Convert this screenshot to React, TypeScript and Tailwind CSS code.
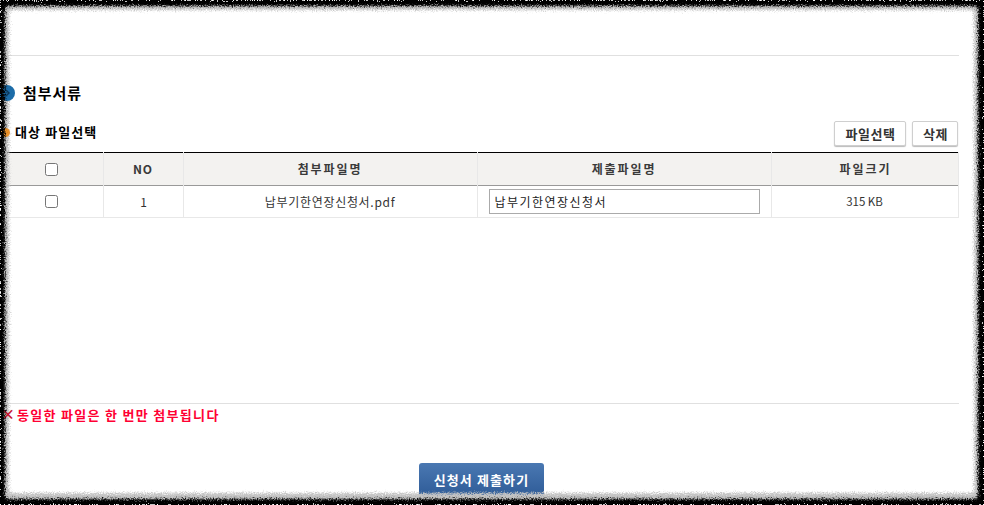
export default function App() {
  const font = { fontFamily: '"Noto Sans CJK KR", "Liberation Sans", sans-serif' };
  return (
    <div className="relative w-[984px] h-[505px] overflow-hidden bg-white text-[#333]" style={font}>
      <div className="h-[56px] border-b border-[#e0e0e0] mr-[25px]" />
      <div className="flex items-center h-[22px] mt-[26px] pl-[23px] relative">
        <span className="absolute z-20 left-[-1px] top-[3px] w-[16px] h-[16px] rounded-full bg-[#1c6ca8] flex items-center justify-center">
          <svg width="6" height="8" viewBox="0 0 6 8" className="ml-[2px]"><path d="M1 1l3 3-3 3" fill="none" stroke="#0c3557" strokeWidth="1.4" /></svg>
        </span>
        <h2 className="text-[15px] leading-[22px] font-bold text-black tracking-[0.95px]">첨부서류</h2>
      </div>
      <div className="flex items-start justify-between h-[31px] mt-[17px] mr-[26px] relative">
        <div className="flex items-center h-[22px] pl-[15px]">
          <span className="absolute z-20 left-[1px] top-[7px] w-[9px] h-[9px] rounded-full bg-[#e8902a]" />
          <h3 className="text-[13px] leading-[22px] font-bold text-black tracking-[1.1px]">대상 파일선택</h3>
        </div>
        <div className="flex gap-[6px]">
          <button className="w-[72px] h-[25px] pl-px border border-[#cfcfcf] rounded-[2px] bg-white shadow-[0_1px_1px_#bbb] text-[13px] font-bold text-[#333] tracking-[0.6px] leading-none">파일선택</button>
          <button className="w-[46px] h-[25px] pl-px border border-[#cfcfcf] rounded-[2px] bg-white shadow-[0_1px_1px_#bbb] text-[13px] font-bold text-[#333] tracking-[0.6px] leading-none">삭제</button>
        </div>
      </div>
      <table className="table-fixed w-[958px] border-collapse border-t border-black text-[12px]">
        <colgroup>
          <col className="w-[103px]" />
          <col className="w-[80px]" />
          <col className="w-[294px]" />
          <col className="w-[294px]" />
          <col className="w-[187px]" />
        </colgroup>
        <thead>
          <tr className="h-[33px] bg-[#f3f2f0] border-b border-[#999] font-bold text-[#3a3a3a] tracking-[1.9px]">
            <th className="border-r border-[#e8e8e8] text-center font-bold"><input type="checkbox" className="w-[13px] h-[13px] block mx-auto" /></th>
            <th className="border-r border-[#e8e8e8] font-bold tracking-[1px]">NO</th>
            <th className="border-r border-[#e8e8e8] font-bold">첨부파일명</th>
            <th className="border-r border-[#e8e8e8] font-bold">제출파일명</th>
            <th className="border-r border-[#e8e8e8] font-bold pl-[2px]">파일크기</th>
          </tr>
        </thead>
        <tbody>
          <tr className="h-[32px] border-b border-[#e8e8e8] text-center tracking-[0.7px]">
            <td className="border-r border-[#e8e8e8]"><input type="checkbox" className="w-[13px] h-[13px] block mx-auto" /></td>
            <td className="border-r border-[#e8e8e8] pl-[2px]">1</td>
            <td className="border-r border-[#e8e8e8]">납부기한연장신청서.pdf</td>
            <td className="border-r border-[#e8e8e8] pl-[11px]">
              <input readOnly value="납부기한연장신청서" className="block w-[271px] h-[25px] border border-[#aaa] px-[5px] text-[12px] text-[#222] tracking-[1.45px] outline-none" />
            </td>
            <td className="border-r border-[#e8e8e8] tracking-normal text-[11.5px]">315 KB</td>
          </tr>
        </tbody>
      </table>
      <div className="h-[186px] border-b border-[#e0e0e0] mr-[25px]" />
      <div className="relative h-[20px] pl-[17px] flex items-center text-[13px] font-bold text-[#ff0033] tracking-[1.3px] leading-none">
        <span className="absolute z-20 left-[1px] top-[2px] text-[#c8102e] font-bold text-[14px]">×</span>
        <p>동일한 파일은 한 번만 첨부됩니다</p>
      </div>
      <div className="flex justify-center mt-[39px] pr-[21px]">
        <button className="w-[125px] h-[33px] rounded-[3px] bg-gradient-to-b from-[#4a78b2] to-[#2f5c98] text-white text-[13px] font-bold tracking-[1.1px] leading-none">신청서 제출하기</button>
      </div>
      <svg className="absolute inset-0 z-10 pointer-events-none" width="984" height="505" viewBox="0 0 984 505">
        <defs>
          <filter id="rim" x="0" y="0" width="100%" height="100%" filterUnits="userSpaceOnUse" primitiveUnits="userSpaceOnUse" colorInterpolationFilters="sRGB">
            <feGaussianBlur in="SourceGraphic" stdDeviation="1.2" result="b" />
            <feTurbulence type="fractalNoise" baseFrequency="0.9" numOctaves="2" seed="9" result="n" />
            <feDisplacementMap in="b" in2="n" scale="7" xChannelSelector="R" yChannelSelector="G" />
          </filter>
        </defs>
        <path
          filter="url(#rim)"
          fillRule="evenodd"
          fill="#c4c4c4"
          d="M-20 -20H1004V525H-20Z M13 10H970Q974 10 974 14V489Q974 493 970 493H13Q9 493 9 489V14Q9 10 13 10Z"
        />
      </svg>
      <svg className="absolute inset-0 z-30 pointer-events-none" width="984" height="505" viewBox="0 0 984 505">
        <defs>
          <filter id="torn" x="0" y="0" width="100%" height="100%" filterUnits="userSpaceOnUse" primitiveUnits="userSpaceOnUse" colorInterpolationFilters="sRGB">
            <feGaussianBlur in="SourceGraphic" stdDeviation="1" result="b" />
            <feTurbulence type="fractalNoise" baseFrequency="0.75" numOctaves="2" seed="4" result="n" />
            <feDisplacementMap in="b" in2="n" scale="7" xChannelSelector="R" yChannelSelector="G" />
          </filter>
        </defs>
        <path
          filter="url(#torn)"
          fillRule="evenodd"
          fill="#000"
          d="M-20 -20H1004V525H-20Z M9 6H974Q978 6 978 10V495Q978 499 974 499H9Q5 499 5 495V10Q5 6 9 6Z"
        />
      </svg>
    </div>
  );
}
